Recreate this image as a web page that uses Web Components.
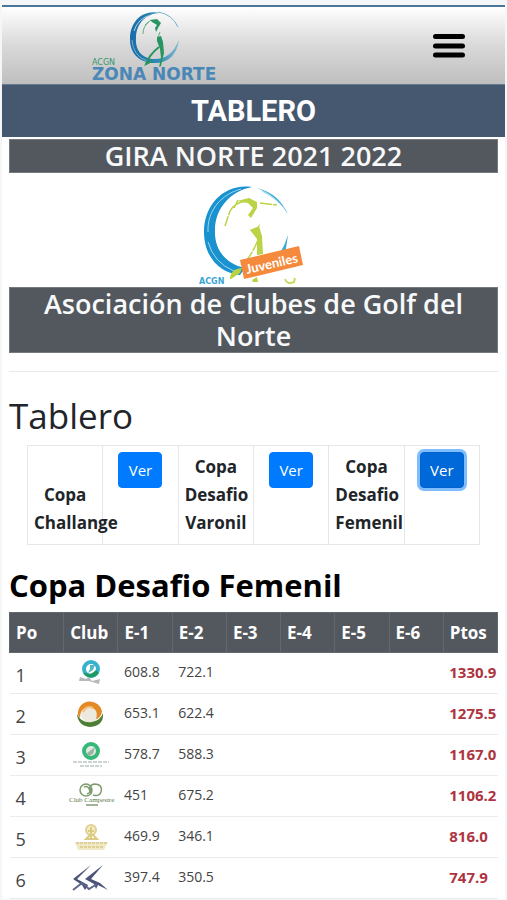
<!DOCTYPE html>
<html lang="es">
<head>
<meta charset="utf-8">
<meta name="viewport" content="width=device-width, initial-scale=1">
<title>Tablero</title>
<style>
html{background:#f5f6f7}
body{margin:0;font-family:"Open Sans","Noto Sans",sans-serif;color:#212529}
</style>
</head>
<body>
<tour-page>
  <site-header slot="header"></site-header>
  <page-title slot="header">TABLERO</page-title>
  <title-band>GIRA NORTE 2021 2022</title-band>
  <junior-logo></junior-logo>
  <title-band>Asociación de Clubes de Golf del Norte</title-band>
  <section-head>Tablero</section-head>
  <cup-picker></cup-picker>
  <score-board heading="Copa Desafio Femenil"></score-board>
</tour-page>
<script>
const define = (name, html, setup) => customElements.define(name, class extends HTMLElement {
  connectedCallback() {
    if (this.shadowRoot) return;
    const t = document.createElement('template');
    t.innerHTML = html;
    this.attachShadow({mode: 'open'}).append(t.content.cloneNode(true));
    if (setup) setup(this, this.shadowRoot);
  }
});

define('tour-page', `<style>
:host{display:block;padding:5px 2px 0}
.frame{background:#fff}
main{padding:2px 7px 0}
</style><div class="frame"><slot name="header"></slot><main><slot></slot></main></div>`);

define('site-header', `<style>
:host{display:block;border-top:2px solid #4b7698;background:linear-gradient(#fff,#d9d9d9 50%,#bfbfbf)}
header{display:flex;justify-content:space-between;align-items:center;height:77px;padding:0 36px 0 86px}
a{display:block;height:77px}
svg{display:block}
button{border:0;background:none;padding:4px;cursor:pointer;display:flex}
</style><header>
<a href="#" aria-label="ACGN Zona Norte"><svg width="136" height="77" viewBox="88 7 136 77">
<defs><linearGradient id="r" x1="0" x2="1"><stop offset="0" stop-color="#176ca8"/><stop offset=".6" stop-color="#328bb5"/><stop offset="1" stop-color="#83b9d2"/></linearGradient></defs>
<path d="M160 13C143 9 130 21 130 39C130 55 141 63 155 63C168 63 177 55 179 40C173 54 165 59 155 59C143 59 135 51 136 38C136 24 146 13 160 13Z" fill="url(#r)"/>
<path d="M158 12Q172 14 178 27M132 40Q133 56 147 61" fill="none" stroke="#78b2cf" stroke-width="1"/>
<path d="M134 31Q138 18 151 15" fill="none" stroke="#b1d5e5" stroke-width="1"/>
<path d="M150 20L157 19L161 23L158 28L156 32L155 28L157 25L152 22ZM157 37L161 36L163 42L164 53L161 66L159 67L161 58L160 49L157 41Z" fill="#27955f"/>
<path d="M159 47Q149 55 146 64L152 61" fill="none" stroke="#27955f" stroke-width="2"/>
<path d="M149 22Q143 26 143 34M151 20L145 25M160 32L158 37" fill="none" stroke="#62ad84" stroke-width="1"/>
<text x="92" y="65" font-family="DejaVu Sans" font-size="8" fill="#36986b">ACGN</text>
<text x="92" y="80" font-family="DejaVu Sans" font-weight="700" font-size="17" fill="#4a86b6">ZONA NORTE</text>
</svg></a>
<button type="button" aria-label="Menú"><svg width="32" height="24"><path d="M2.500 2.500H29.500M2.500 12H29.500M2.500 21H29.500" stroke="#000" stroke-width="5" stroke-linecap="round"/></svg></button>
</header>`);

define('page-title', `<style>
:host{display:block;background:#45586f;color:#fff;text-align:center;border-top:1px solid #687d91}
h1{margin:0;font:700 29px/52px Roboto,sans-serif}
</style><h1><slot></slot></h1>`);

define('title-band', `<style>
:host{display:block;background:#53585e;color:#f8f9fa;text-align:center;border:1px solid #747a7f;box-sizing:border-box}
h2{margin:0 32px;font-size:27px;line-height:32px;font-weight:600}
</style><h2><slot></slot></h2>`);

define('junior-logo', `<style>
:host{display:block}svg{display:block;margin:0 auto;overflow:visible}
</style><svg width="108" height="114" viewBox="200 172 108 114" role="img" aria-label="ACGN Juveniles">
<path d="M252 186C225 182 204 203 204 231C204 255 219 272 240 274L245 267C226 263 214 249 215 229C215 207 231 190 252 186Z" fill="#1992cf"/>
<path d="M208 231C207 209 222 193 241 188M208 241Q214 262 234 270" fill="none" stroke="#9ed6ed" stroke-width="1"/>
<path d="M257 187Q280 193 288 214Q279 196 257 187Z" fill="#3aabd6"/>
<path d="M262 190Q278 198 287 211" fill="none" stroke="#99d5ec" stroke-width="1"/>
<path d="M288 234L285 254L279 254Q285 244 288 234Z" fill="#3ea9d4"/>
<path d="M237 200L249 197L257 201L257 207L251 217L248 214L253 207L248 202ZM250 229L259 225L262 235L263 253L257 254L257 238ZM249 229L257 227L260 222L258 232Z" fill="#bbd447"/>
<path d="M258 239Q253 251 247 259M247 200Q235 201 230 210L225 225M238 199L234 207M260 202L277 204" fill="none" stroke="#bbd447" stroke-width="1.500" stroke-dasharray="12 1"/>
<path d="M230 278Q230 268 242 267L240 272L231 278ZM252 279L257 276L258 281H253Z" fill="#b7d345"/>
<path d="M285 278Q287 284 294 281L295 277" fill="none" stroke="#cada65" stroke-width="2"/>
<path d="M240 259L299 245L303 264L244 278Z" fill="#f58a3d"/>
<text transform="translate(247 273) rotate(-13)" font-family="Lato" font-weight="700" font-size="13" fill="#fff">Juveniles</text>
<text x="199" y="283" font-family="DejaVu Sans" font-weight="700" font-size="8" fill="#3aa5d2">ACGN</text>
</svg>`);

define('section-head', `<style>
:host{display:block}
hr{border:0;border-top:1px solid #e8e9ea;margin:18px 0 20px}
h2{margin:0;font-size:35px;line-height:48px;font-weight:500}
</style><hr><h2><slot></slot></h2>`);

define('cup-picker', `<style>
:host{display:block;margin:5px 18px 0}
table{width:100%;table-layout:fixed;border-collapse:collapse;border:1px solid #dee2e6}
th,td{border:1px solid #e4e6e8;padding:7px 6px;text-align:center;vertical-align:bottom}
td{vertical-align:top;padding:6px 0}
th{font-size:17px;line-height:28px;font-weight:700}
button{font:500 15px/24px "Open Sans",sans-serif;width:44px;height:36px;padding:0;color:#fff;background:#007bff;border:1px solid #007bff;border-radius:4px;cursor:pointer}
button.active{background:#0069d9;border-color:#0062cc;box-shadow:0 0 0 3px #80bdff}
</style><table><tbody><tr>
<th scope="row" id="a">Copa Challange</th><td><button type="button" aria-describedby="a">Ver</button></td>
<th scope="row" id="b">Copa Desafio Varonil</th><td><button type="button" aria-describedby="b">Ver</button></td>
<th scope="row" id="c">Copa Desafio Femenil</th><td><button type="button" class="active" aria-describedby="c">Ver</button></td>
</tr></tbody></table>`);

const emblems = {
  juvenil: `<circle cx="22" cy="10" r="7" fill="#fff" stroke="#38b1cf" stroke-width="4"/><path d="M14 14Q22 23 30 14L27 11Q21 17 17 14Z" fill="#1c9b61"/><path d="M21 6L26 6L24 11L19 14L21 10Z" fill="#55b6c4"/><path d="M11 18L17 20L20 18L23 22L31 20L30 25L20 22L10 22Z" fill="#b7b9b9"/>`,
  anillo: `<circle cx="21" cy="14" r="9" fill="#eee9df"/><path d="M9 15A12 12 0 0 1 33 12Q31 19 27 19Q30 9 21 7Q11 7 11 18Z" fill="#e38a27"/><path d="M8 14Q13 24 23 22Q32 20 34 13Q35 26 21 27Q9 26 8 14Z" fill="#4e7e35"/><path d="M14 12Q17 5 24 8" fill="none" stroke="#f4c27f" stroke-width="2"/>`,
  verde: `<circle cx="22" cy="10" r="7" fill="#e2e9e3" stroke="#35b878" stroke-width="4"/><path d="M18 12L26 6L24 13L19 15Z" fill="#9bb5a4"/><path d="M4 21H40M11 25H33" stroke="#cdd5d0" stroke-width="2" stroke-dasharray="4 1"/>`,
  campestre: `<g fill="none" stroke="#7e9b6d" stroke-width="1.500"><circle cx="17" cy="8" r="6"/><path d="M22 12Q18 4 25 2Q34 2 32 10Q30 15 24 13M15 5Q20 3 21 10M18 12Q23 10 22 6"/></g><text x="0" y="20" font-family="Liberation Serif" font-size="7" fill="#587b4a">Club Campestre</text><path d="M17 23H29" stroke="#a1b497" stroke-width="2"/>`,
  dorado: `<circle cx="22" cy="7" r="5" fill="#f5edc9" stroke="#e0d193" stroke-width="2"/><path d="M22 4V16M19 8H25M17 16L21 12H24L28 16Z" fill="none" stroke="#dccb83" stroke-width="2"/><path d="M6 19H39L35 27H9Z" fill="#f1e9c6"/><path d="M7 20H38M11 24H34" stroke="#ddd09a" stroke-width="2" stroke-dasharray="3 1"/>`,
  puntas: `<path d="M22 1L8 15L19 21L16 26L13 21L4 15ZM34 1L22 15L31 19L39 26L29 21L27 25L25 20L16 15Z" fill="#4b5379"/><path d="M4 26L13 19L20 25L28 20" fill="none" stroke="#5e6587" stroke-width="2"/>`
};
define('club-logo', `<style>:host{display:block}svg{display:block;overflow:visible}</style><svg width="45" height="28" viewBox="0 0 45 28" aria-hidden="true"></svg>`,
  (host, root) => { root.querySelector('svg').innerHTML = emblems[host.getAttribute('club')]; });

const scores = [
  ['juvenil','608.8','722.1','1330.9'],
  ['anillo','653.1','622.4','1275.5'],
  ['verde','578.7','588.3','1167.0'],
  ['campestre','451','675.2','1106.2'],
  ['dorado','469.9','346.1','816.0'],
  ['puntas','397.4','350.5','747.9']
];
define('score-board', `<style>
:host{display:block}
h2{margin:17px 0 4px;color:#000;font-size:31px;line-height:46px;font-weight:700}
table{width:100%;table-layout:fixed;border-collapse:collapse}
th,td{padding:0 0 0 6px;text-align:left;white-space:nowrap;box-sizing:border-box}
thead th{height:40px;background:#53585e;color:#fff;font-size:17px;font-weight:700;border:1px solid #62686e}
tbody th,td{height:41px;border-bottom:1px solid #e9ecef;vertical-align:top}
tbody th{padding-top:4px;font-size:18px;line-height:36px;font-weight:400;color:#444}
td{font-size:14px;line-height:38px;color:#444}
td.logo{padding:6px 0 0 5px}
td.total{font-size:15px;font-weight:700;color:#ad3440}
</style><h2></h2><table><thead><tr><th scope="col">Po</th><th scope="col">Club</th><th scope="col">E-1</th><th scope="col">E-2</th><th scope="col">E-3</th><th scope="col">E-4</th><th scope="col">E-5</th><th scope="col">E-6</th><th scope="col">Ptos</th></tr></thead><tbody></tbody></table>`,
  (host, root) => {
    root.querySelector('h2').textContent = host.getAttribute('heading');
    root.querySelector('tbody').innerHTML = scores.map(([club,e1,e2,total], i) =>
      `<tr><th scope="row">${i + 1}</th><td class="logo"><club-logo club="${club}"></club-logo></td><td>${e1}</td><td>${e2}</td><td></td><td></td><td></td><td></td><td class="total">${total}</td></tr>`).join('');
  });
</script>
</body>
</html>
